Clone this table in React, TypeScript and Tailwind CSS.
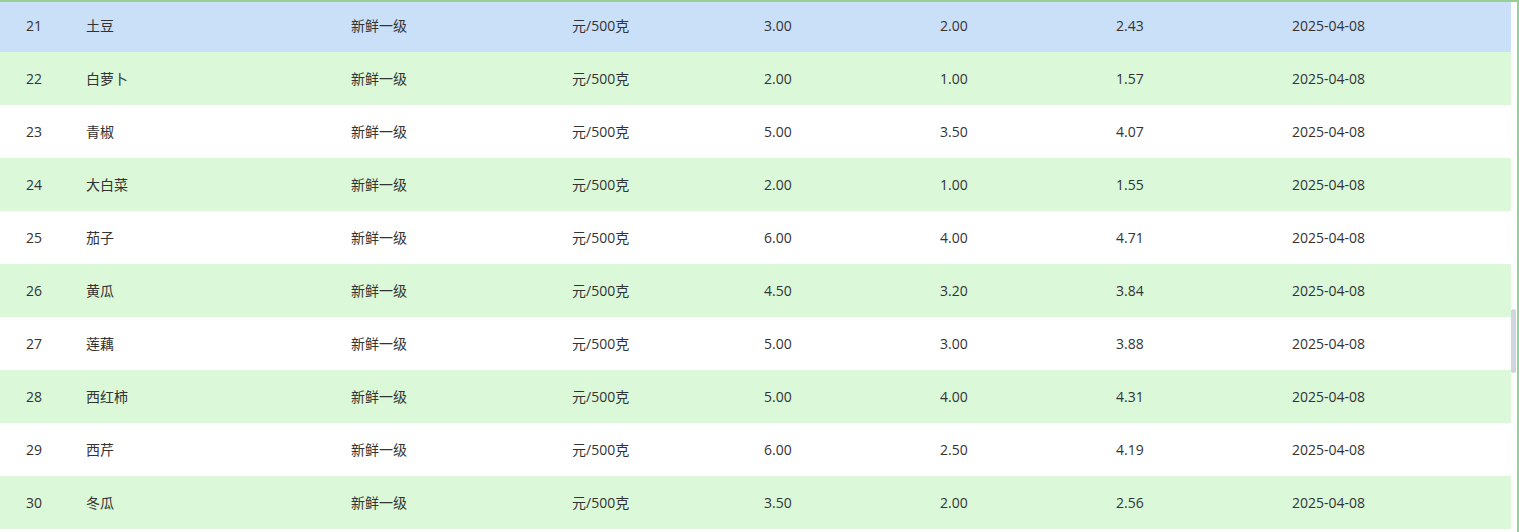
const rows = [
  { id: 21, name: '土豆', high: '3.00', low: '2.00', avg: '2.43' },
  { id: 22, name: '白萝卜', high: '2.00', low: '1.00', avg: '1.57' },
  { id: 23, name: '青椒', high: '5.00', low: '3.50', avg: '4.07' },
  { id: 24, name: '大白菜', high: '2.00', low: '1.00', avg: '1.55' },
  { id: 25, name: '茄子', high: '6.00', low: '4.00', avg: '4.71' },
  { id: 26, name: '黄瓜', high: '4.50', low: '3.20', avg: '3.84' },
  { id: 27, name: '莲藕', high: '5.00', low: '3.00', avg: '3.88' },
  { id: 28, name: '西红柿', high: '5.00', low: '4.00', avg: '4.31' },
  { id: 29, name: '西芹', high: '6.00', low: '2.50', avg: '4.19' },
  { id: 30, name: '冬瓜', high: '3.50', low: '2.00', avg: '2.56' },
];

const App = () => (
  <div
    className="h-[532px] w-full flex overflow-hidden bg-white border-t-2 border-r-2 border-[#95d195] text-[14px] text-[#333333]"
    style={{ fontFamily: '"Open Sans", "Noto Sans CJK SC", sans-serif' }}
  >
    <div className="flex-1 flex flex-col pt-[1px] overflow-hidden">
      <div className="-mt-[4px]">
        {rows.map((row, i) => (
          <div
            key={row.id}
            className={
              'h-[53px] flex items-center whitespace-nowrap ' +
              (i === 0 ? 'bg-[#cadff8]' : i % 2 === 1 ? 'bg-[#dbf8d9]' : 'bg-white')
            }
          >
            <div className="w-[86px] pl-[26px]">{row.id}</div>
            <div className="w-[265px]">{row.name}</div>
            <div className="w-[221px]">新鲜一级</div>
            <div className="w-[192px]">元/500克</div>
            <div className="w-[176px]">{row.high}</div>
            <div className="w-[176px]">{row.low}</div>
            <div className="w-[176px]">{row.avg}</div>
            <div className="flex-1">2025-04-08</div>
          </div>
        ))}
      </div>
    </div>
    <div className="w-[6px] flex flex-col pt-[307px]">
      <div className="h-[64px] w-[5px] rounded-full bg-[#d1d5dd]" />
    </div>
  </div>
);

export default App;
